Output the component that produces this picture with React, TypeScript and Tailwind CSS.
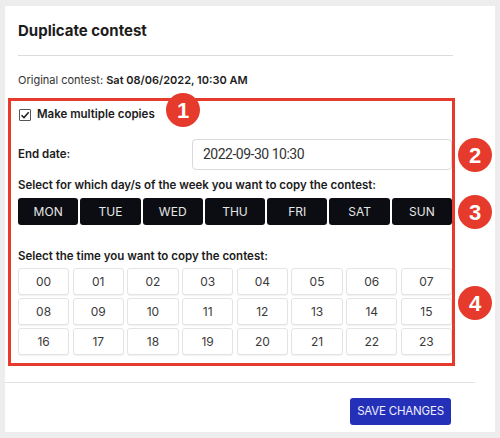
import React, { useState } from "react";

const DAYS = ["MON", "TUE", "WED", "THU", "FRI", "SAT", "SUN"];
const HOURS = Array.from({ length: 24 }, (_, i) => String(i).padStart(2, "0"));

const Marker = ({ n, className }: { n: number; className: string }) => (
  <div
    className={`absolute w-[34px] h-[34px] rounded-full bg-[#e63b2c] flex items-center justify-center text-white text-[22px] font-bold [font-family:'Liberation_Sans',Arial,sans-serif] ${className}`}
  >
    {n}
  </div>
);

export default function App() {
  const [multi, setMulti] = useState(true);

  return (
    <div className="w-[500px] h-[438px] bg-[#ededed] pt-[6px] px-[5px] [font-family:Inter,'Noto_Sans',sans-serif] text-[#1c1c1c]">
      <div className="h-[426px] bg-white pl-[13px]">
        <div className="w-[435px]">
          <h2 className="pt-[15px] pb-[14px] text-[15px] leading-[20px] font-bold border-b border-[#dcdcdc]">
            Duplicate contest
          </h2>

          <p className="mt-[16px] text-[11px] leading-[16px] text-[#333]">
            Original contest: <span className="font-semibold text-[#1c1c1c]">Sat 08/06/2022, 10:30 AM</span>
          </p>

          {/* annotated block */}
          <div className="relative mt-[10px] -ml-[10px] w-[447px] border-[3px] border-[#e63b2c] pl-[7px] pt-[6px] pb-[8px]">
            <label className="flex items-center gap-[6px] h-[16px] text-[11.5px] font-semibold">
              <span
                onClick={() => setMulti(!multi)}
                className="w-[12px] h-[12px] border border-[#555] rounded-[1px] flex items-center justify-center ml-[1px]"
              >
                {multi && (
                  <svg width="10" height="10" viewBox="0 0 10 10">
                    <path d="M1.5 5.2 L4 7.6 L8.7 2.2" fill="none" stroke="#222" strokeWidth="1.5" />
                  </svg>
                )}
              </span>
              Make multiple copies
            </label>

            <div className="mt-[16px] flex items-center w-[434px]">
              <span className="w-[174px] text-[11.5px] font-semibold">End date:</span>
              <div className="flex-1 h-[31px] border border-[#d9d9d9] rounded-[4px] pl-[10px] flex items-center text-[14px] tracking-[-0.5px] text-[#333] [font-family:Roboto,sans-serif]">
                2022-09-30 10:30
              </div>
            </div>

            <p className="mt-[7px] text-[11.5px] leading-[16px] font-semibold">
              Select for which day/s of the week you want to copy the contest:
            </p>
            <div className="mt-[5px] grid grid-cols-7 gap-[2px] w-[434px]">
              {DAYS.map((d) => (
                <button
                  key={d}
                  className="h-[27px] bg-[#0b0d12] rounded-[3px] text-[#e6e6e6] text-[12px] flex items-center justify-center"
                >
                  {d}
                </button>
              ))}
            </div>

            <p className="mt-[23px] text-[11.5px] leading-[16px] font-semibold">
              Select the time you want to copy the contest:
            </p>
            <div className="mt-[4px] grid grid-cols-8 gap-x-[3.5px] gap-y-[3px] w-[434px]">
              {HOURS.map((h) => (
                <button
                  key={h}
                  className="h-[27px] bg-white border border-[#e4e4e4] rounded-[3px] shadow-[0_1px_1px_rgba(0,0,0,0.06)] text-[12px] text-[#3a3a3a] flex items-center justify-center"
                >
                  {h}
                </button>
              ))}
            </div>

            <Marker n={1} className="left-[155px] -top-[8px]" />
            <Marker n={2} className="left-[447px] top-[37px]" />
            <Marker n={3} className="left-[447px] top-[94px]" />
            <Marker n={4} className="left-[447px] top-[185px]" />
          </div>

          <div className="mt-[16px] -ml-[13px] w-[470px] border-b border-[#e2e2e2]" />

          <div className="mt-[15px] flex justify-end pr-[2px]">
            <button className="w-[101px] h-[27px] bg-[#2530b8] rounded-[3px] text-[#eef] text-[11.5px] tracking-[-0.2px]">
              SAVE CHANGES
            </button>
          </div>
        </div>
      </div>
    </div>
  );
}
